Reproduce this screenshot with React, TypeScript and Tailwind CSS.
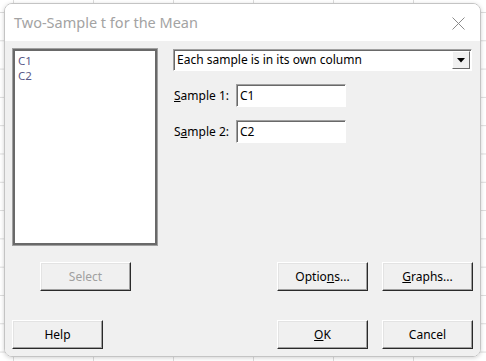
import React from 'react';

const font = "font-['Noto_Sans',sans-serif]";

function Btn({ children, disabled, className = '' }: { children: React.ReactNode; disabled?: boolean; className?: string }) {
  return (
    <button
      type="button"
      className={`h-[29px] w-[91px] bg-[#f0f0f0] border border-t-white border-l-white border-b-[#2a2a2a] border-r-[#2a2a2a] shadow-[inset_-1px_-1px_0_#a0a0a0,inset_1px_1px_0_#e3e3e3] text-[12px] ${disabled ? 'text-[#a0a0a0]' : 'text-black'} ${className}`}
    >
      {children}
    </button>
  );
}

function Field({ label, value }: { label: React.ReactNode; value: string }) {
  return (
    <div className="flex items-center">
      <span className="w-[63px] pl-[1px] text-[12px] text-black">{label}</span>
      <div className="h-[23px] w-[110px] bg-white border border-t-[#a0a0a0] border-l-[#a0a0a0] border-b-white border-r-white shadow-[inset_1px_1px_0_#696969] pl-[3px] text-[12px] leading-[21px] text-black">
        {value}
      </div>
    </div>
  );
}

export default function App() {
  return (
    <div className={`h-[361px] w-[486px] overflow-hidden bg-white bg-[linear-gradient(to_right,#dcdcdc_1px,transparent_1px),linear-gradient(to_bottom,#dcdcdc_1px,transparent_1px)] bg-[size:80px_28.3px] bg-[position:13px_12px] pl-[4px] pt-[3px] ${font}`}>
      <div className="flex h-[354px] w-[477px] flex-col overflow-hidden rounded-[8px] border border-[#c4c4c4] shadow-[0_1px_4px_rgba(0,0,0,0.18)]">
        {/* title bar */}
        <div className="flex h-[37px] shrink-0 items-center justify-between bg-white pl-[9px] pr-[15px]">
          <span className="text-[14.5px] text-[#a3a3a3]">Two-Sample t for the Mean</span>
          <svg width="13" height="13" viewBox="0 0 13 13" className="mt-[1px]">
            <path d="M0.5 0.5 L12.5 12.5 M12.5 0.5 L0.5 12.5" stroke="#8a8a8a" strokeWidth="1" fill="none" />
          </svg>
        </div>

        {/* body */}
        <div className="flex flex-1 flex-col bg-[#f0f0f0] pl-[7px] pt-[7px]">
          <div className="flex">
            <div className="h-[198px] w-[146px] border border-[#a0a0a0] bg-white shadow-[inset_2px_2px_0_#696969,inset_-2px_-2px_0_#696969] pl-[5px] pt-[4px] text-[11.5px] leading-[15px] text-[#5a5a88]">
              <div className="h-[15px]">C1</div>
              <div className="h-[15px]">C2</div>
            </div>

            <div className="ml-[15px] flex flex-col">
              <div className="mt-[1px] flex h-[22px] w-[299px] items-center bg-white border border-t-[#a0a0a0] border-l-[#a0a0a0] border-b-white border-r-white shadow-[inset_1px_1px_0_#696969]">
                <span className="flex-1 pl-[3px] text-[12px] text-black">Each sample is in its own column</span>
                <div className="mr-[1px] flex h-[18px] w-[18px] items-center justify-center bg-[#f0f0f0] border border-t-white border-l-white border-b-[#696969] border-r-[#696969]">
                  <svg width="8" height="5" viewBox="0 0 8 5">
                    <path d="M0 0 H8 L4 4.5 Z" fill="#000" />
                  </svg>
                </div>
              </div>

              <div className="mt-[13px] flex flex-col gap-[13px]">
                <Field label={<><span className="underline">S</span>ample 1:</>} value="C1" />
                <Field label={<>S<span className="underline">a</span>mple 2:</>} value="C2" />
              </div>
            </div>
          </div>

          <div className="mt-[16px] flex">
            <Btn disabled className="ml-[28px]">Select</Btn>
            <div className="ml-auto mr-[7px] flex gap-[14px]">
              <Btn>Optio<span className="underline">n</span>s...</Btn>
              <Btn><span className="underline">G</span>raphs...</Btn>
            </div>
          </div>

          <div className="mt-[29px] flex">
            <Btn>Help</Btn>
            <div className="ml-auto mr-[7px] flex gap-[14px]">
              <Btn><span className="underline">O</span>K</Btn>
              <Btn>Cancel</Btn>
            </div>
          </div>
        </div>
      </div>
    </div>
  );
}
